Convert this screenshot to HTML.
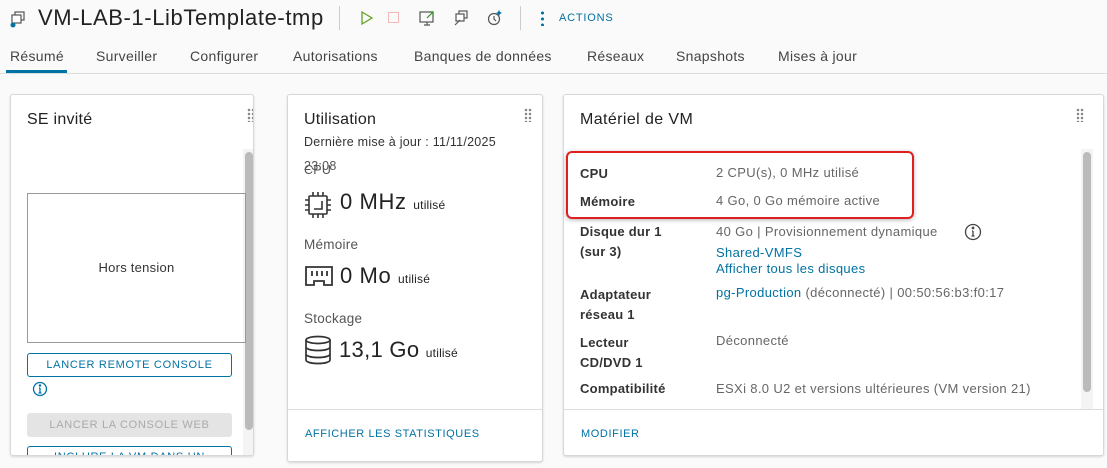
<!DOCTYPE html>
<html><head><meta charset="utf-8"><style>
*{box-sizing:border-box;margin:0;padding:0}
body{width:1107px;height:468px;overflow:hidden;background:#fafafa;font-family:"Liberation Sans",sans-serif;color:#333;position:relative;letter-spacing:.25px}
.a{position:absolute;white-space:nowrap}
.card{position:absolute;background:#fff;border:1px solid #d8d8d8;border-radius:3px;box-shadow:0 1px 2px rgba(0,0,0,.15);overflow:hidden}
.dots{position:absolute;width:8px;height:14px;background-image:radial-gradient(circle,#888 1.2px,transparent 1.4px);background-size:4px 4px}
.lbl{font-size:13px;font-weight:bold;color:#333}
.val{font-size:13px;color:#666;letter-spacing:.35px}
.lnk{color:#0072a3}
.btn{position:absolute;font-size:11px;letter-spacing:.7px;text-align:center;border-radius:3px}
.tab{position:absolute;top:48px;font-size:14px;color:#444;white-space:nowrap;letter-spacing:.3px}
</style></head><body>
<svg class="a" style="left:9px;top:10px" width="18" height="18" viewBox="0 0 18 18" fill="none" stroke="#555" stroke-width="1.2"><rect x="6" y="2" width="9" height="8"/><rect x="3" y="5" width="9" height="8" fill="#fff"/><circle cx="4" cy="15" r="2.5" fill="#0072a3" stroke="none"/></svg>
<div class="a" style="left:38px;top:5px;font-size:22px;color:#222;letter-spacing:.6px">VM-LAB-1-LibTemplate-tmp</div>
<div class="a" style="left:339px;top:6px;width:1px;height:24px;background:#ccc"></div>
<svg class="a" style="left:360px;top:10px" width="14" height="16"><path d="M2 2 L12 8 L2 14 Z" fill="none" stroke="#62a420" stroke-width="1.3"/></svg>
<div class="a" style="left:388px;top:12px;width:11px;height:11px;border:1px solid #f2b8b8"></div>
<svg class="a" style="left:418px;top:9px" width="18" height="18" fill="none" stroke="#555" stroke-width="1.2"><rect x="2" y="3" width="13" height="10"/><path d="M6 16h6M9 13v3"/><path d="M9 9l6-6M11 3h4v4" stroke="#3c8a2e"/></svg>
<svg class="a" style="left:452px;top:9px" width="18" height="18" fill="none" stroke="#555" stroke-width="1.2"><rect x="7" y="2" width="8" height="7"/><rect x="4" y="5" width="8" height="7" fill="#fff"/><path d="M3 16l5-5"/></svg>
<svg class="a" style="left:486px;top:8px" width="18" height="18" fill="none" stroke="#555" stroke-width="1.2"><circle cx="8" cy="11" r="5.5"/><path d="M8 8v3l2 2"/><path d="M13 2l1 2 2 1-2 1-1 2-1-2-2-1 2-1z" fill="#0072a3" stroke="none"/></svg>
<div class="a" style="left:520px;top:6px;width:1px;height:24px;background:#ccc"></div>
<div class="a" style="left:541px;top:10px;width:3px;height:16px;background-image:radial-gradient(circle,#0072a3 1.4px,transparent 1.6px);background-size:3px 6px"></div>
<div class="a" style="left:559px;top:12px;font-size:11px;letter-spacing:.8px;color:#0072a3">ACTIONS</div>
<div class="a" style="left:0;top:73px;width:1107px;height:1px;background:#ddd"></div>
<div class="a" style="left:6px;top:70px;width:61px;height:3px;background:#0072a3"></div>
<div class="tab" style="left:10px">Résumé</div>
<div class="tab" style="left:96px">Surveiller</div>
<div class="tab" style="left:190px">Configurer</div>
<div class="tab" style="left:293px">Autorisations</div>
<div class="tab" style="left:414px">Banques de données</div>
<div class="tab" style="left:587px">Réseaux</div>
<div class="tab" style="left:676px">Snapshots</div>
<div class="tab" style="left:778px">Mises à jour</div>
<div class="card" style="left:10px;top:94px;width:244px;height:362px">
<div class="dots" style="left:236px;top:13px"></div>
<div class="a" style="left:16px;top:16px;font-size:16px;color:#222">SE invité</div>
<div class="a" style="left:232px;top:54px;width:12px;height:310px;background:#f4f4f4"></div>
<div class="a" style="left:234px;top:57px;width:8px;height:278px;background:#bbb;border-radius:4px"></div>
<div class="a" style="left:16px;top:98px;width:219px;height:150px;border:1px solid #999"></div>
<div class="a" style="left:16px;top:165px;width:219px;text-align:center;font-size:13px">Hors tension</div>
<div class="btn" style="left:16px;top:258px;width:205px;height:24px;border:1px solid #0072a3;color:#0072a3;line-height:22px">LANCER REMOTE CONSOLE</div>
<svg class="a" style="left:21px;top:286px" width="16" height="16" fill="none" stroke="#0072a3" stroke-width="1.3"><circle cx="8" cy="8" r="6.5"/><path d="M8 7v5M6.5 12h3M7 7h1"/><circle cx="8" cy="4.5" r=".6" fill="#0072a3"/></svg>
<div class="btn" style="left:16px;top:318px;width:205px;height:24px;background:#e4e4e4;color:#aaa;line-height:24px">LANCER LA CONSOLE WEB</div>
<div class="btn" style="left:16px;top:351px;width:205px;height:24px;border:1px solid #0072a3;color:#0072a3;line-height:20px">INCLURE LA VM DANS UN MODÈLE</div>
</div>
<div class="card" style="left:287px;top:94px;width:256px;height:368px">
<div class="dots" style="left:236px;top:13px"></div>
<div class="a" style="left:16px;top:16px;font-size:16px;color:#222">Utilisation</div>
<div class="a" style="left:16px;top:40px;font-size:12.5px">Dernière mise à jour : 11/11/2025</div>
<div class="a" style="left:16px;top:64px;font-size:12.5px;color:#555">23:08</div>
<div class="a" style="left:16px;top:68px;font-size:12.5px;color:#555">CPU</div>
<svg class="a" style="left:16px;top:96px" width="28" height="28" fill="none" stroke="#333" stroke-width="1.6"><rect x="5" y="5" width="18" height="18" rx="1"/><path d="M9 1v4M14 1v4M19 1v4M9 23v4M14 23v4M19 23v4M1 9h4M1 14h4M1 19h4M23 9h4M23 14h4M23 19h4M10 18h8v-8"/></svg>
<div class="a" style="left:52px;top:94px;font-size:22px;color:#222;letter-spacing:.6px">0 MHz <span style="font-size:12px;letter-spacing:.2px">utilisé</span></div>
<div class="a" style="left:16px;top:142px;font-size:13.5px;color:#555">Mémoire</div>
<svg class="a" style="left:16px;top:170px" width="30" height="22" fill="none" stroke="#333" stroke-width="1.8"><path d="M2 2h26v18h-8v-4h-10v4H2z"/><path d="M8 6v5M13 6v5M18 6v5M23 6v5"/></svg>
<div class="a" style="left:52px;top:168px;font-size:22px;color:#222;letter-spacing:.6px">0 Mo <span style="font-size:12px;letter-spacing:.2px">utilisé</span></div>
<div class="a" style="left:16px;top:216px;font-size:13.5px;color:#555">Stockage</div>
<svg class="a" style="left:16px;top:240px" width="28" height="30" fill="none" stroke="#333" stroke-width="1.7"><ellipse cx="14" cy="5" rx="12" ry="3.5"/><path d="M2 5v20c0 2 5 3.5 12 3.5s12-1.5 12-3.5V5M2 12c0 2 5 3.5 12 3.5s12-1.5 12-3.5M2 19c0 2 5 3.5 12 3.5s12-1.5 12-3.5"/></svg>
<div class="a" style="left:51px;top:242px;font-size:22px;color:#222;letter-spacing:.3px">13,1 Go <span style="font-size:12px;letter-spacing:.2px">utilisé</span></div>
<div class="a" style="left:0;top:314px;width:256px;height:1px;background:#ddd"></div>
<div class="a" style="left:17px;top:333px;font-size:11px;letter-spacing:.6px;color:#0072a3">AFFICHER LES STATISTIQUES</div>
</div>
<div class="card" style="left:563px;top:94px;width:541px;height:362px">
<div class="dots" style="left:512px;top:13px"></div>
<div class="a" style="left:16px;top:16px;font-size:16px;color:#222;letter-spacing:.4px">Matériel de VM</div>
<div class="a" style="left:517px;top:54px;width:12px;height:260px;background:#f4f4f4"></div>
<div class="a" style="left:519px;top:57px;width:8px;height:240px;background:#bbb;border-radius:4px"></div>
<div class="a lbl" style="left:16px;top:71px">CPU</div><div class="a val" style="left:152px;top:70px">2 CPU(s), 0 MHz utilisé</div>
<div class="a lbl" style="left:16px;top:99px">Mémoire</div><div class="a val" style="left:152px;top:98px">4 Go, 0 Go mémoire active</div>
<div class="a lbl" style="left:16px;top:127px;line-height:20px">Disque dur 1<br>(sur 3)</div>
<div class="a val" style="left:152px;top:129px">40 Go | Provisionnement dynamique</div>
<svg class="a" style="left:400px;top:128px" width="18" height="18" fill="none" stroke="#444" stroke-width="1.3"><circle cx="9" cy="9" r="7.5"/><path d="M9 8v5M7.5 13h3M8 8h1"/><circle cx="9" cy="5" r=".7" fill="#444"/></svg>
<div class="a val lnk" style="left:152px;top:150px">Shared-VMFS</div>
<div class="a val lnk" style="left:152px;top:166px">Afficher tous les disques</div>
<div class="a lbl" style="left:16px;top:190px;line-height:20px">Adaptateur<br>réseau 1</div>
<div class="a val" style="left:152px;top:190px"><span class="lnk">pg-Production</span> (déconnecté) | 00:50:56:b3:f0:17</div>
<div class="a lbl" style="left:16px;top:238px;line-height:20px">Lecteur<br>CD/DVD 1</div>
<div class="a val" style="left:152px;top:238px">Déconnecté</div>
<div class="a lbl" style="left:16px;top:286px">Compatibilité</div>
<div class="a val" style="left:152px;top:286px">ESXi 8.0 U2 et versions ultérieures (VM version 21)</div>
<div class="a" style="left:0;top:314px;width:541px;height:1px;background:#ddd"></div>
<div class="a" style="left:17px;top:333px;font-size:11px;letter-spacing:.6px;color:#0072a3">MODIFIER</div>
</div>
<div class="a" style="left:566px;top:151px;width:348px;height:68px;border:2px solid #e02020;border-radius:6px;box-shadow:0 1px 4px rgba(0,0,0,.3)"></div>
</body></html>
